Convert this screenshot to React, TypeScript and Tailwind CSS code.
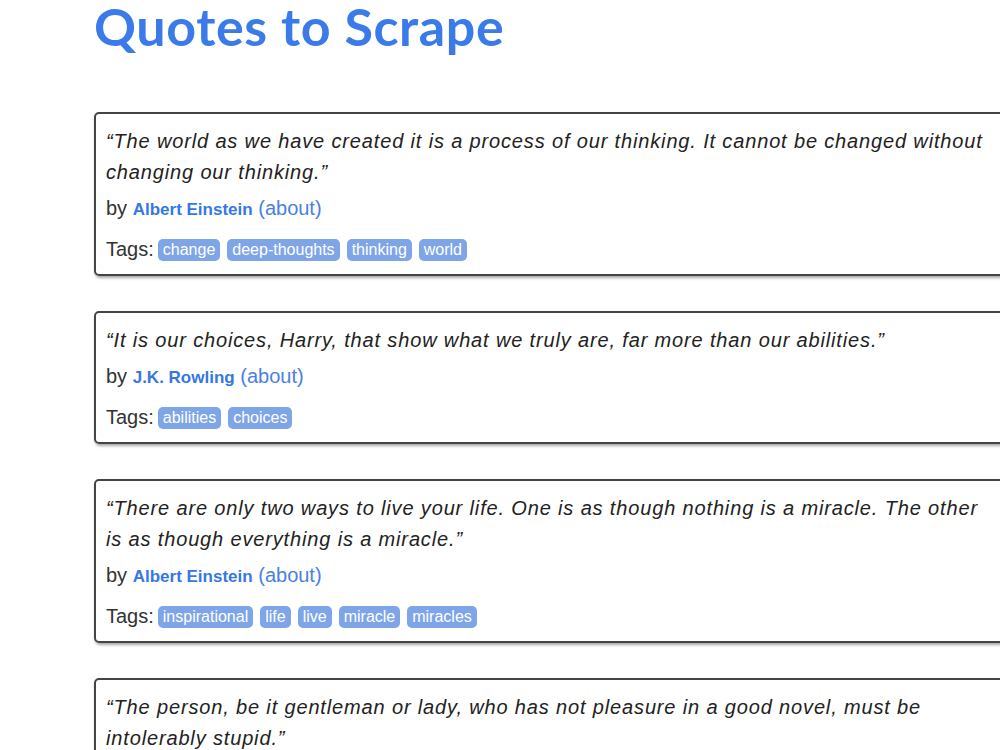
const quotes = [
  {
    text: "“The world as we have created it is a process of our thinking. It cannot be changed without changing our thinking.”",
    author: "Albert Einstein",
    tags: ["change", "deep-thoughts", "thinking", "world"],
  },
  {
    text: "“It is our choices, Harry, that show what we truly are, far more than our abilities.”",
    author: "J.K. Rowling",
    tags: ["abilities", "choices"],
  },
  {
    text: "“There are only two ways to live your life. One is as though nothing is a miracle. The other is as though everything is a miracle.”",
    author: "Albert Einstein",
    tags: ["inspirational", "life", "live", "miracle", "miracles"],
  },
  {
    text: "“The person, be it gentleman or lady, who has not pleasure in a good novel, must be intolerably stupid.”",
    author: "Jane Austen",
    tags: ["aliteracy", "books", "classic", "humor"],
  },
];

export default function App() {
  return (
    <div className="h-[750px] w-[1000px] overflow-hidden bg-white pl-[94px] font-['Liberation_Sans',Arial,sans-serif] text-[#333]">
      <h1 className="pt-[0px] font-['Lato',sans-serif] text-[52px] font-bold leading-[52px] tracking-[0.6px] text-[#3b7be9]">
        Quotes to Scrape
      </h1>

      <div className="mt-[60px] flex w-[914px] flex-col gap-[35px]">
        {quotes.map((q, i) => (
          <div
            key={i}
            className="rounded-[5px] border-2 border-[#444] px-[10px] pt-[12px] pb-[9px] shadow-[1px_2px_3px_rgba(0,0,0,0.35)]"
          >
            <span className="block text-[20px] italic leading-[31px] tracking-[0.85px] text-[#222]">{q.text}</span>
            <div className="mt-[5px] text-[20px] leading-[31px]">
              by{" "}
              <span className="text-[17px] font-bold text-[#3677e6]">{q.author}</span>{" "}
              <a className="text-[#4a80e3]">(about)</a>
            </div>
            <div className="mt-[9px] flex items-center gap-[7px] text-[20px] leading-[31px]">
              <span className="mr-[-3px]">Tags:</span>
              {q.tags.map((t) => (
                <a
                  key={t}
                  className="rounded-[5px] bg-[#7ea5e8] px-[5px] text-[16px] leading-[22px] text-white"
                >
                  {t}
                </a>
              ))}
            </div>
          </div>
        ))}
      </div>
    </div>
  );
}
